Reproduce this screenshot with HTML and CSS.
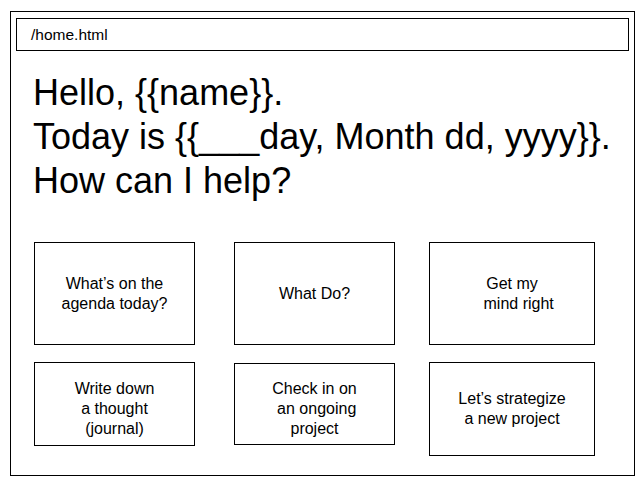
FILE: index.html
```html
<!DOCTYPE html>
<html>
<head>
<meta charset="utf-8">
<link rel="stylesheet" href="styles.css">
</head>
<body>
<div class="frame">
  <div class="address">/home.html</div>
  <h1 class="greeting">Hello, {{name}}.<br>Today is {{___day, Month dd, yyyy}}.<br>How can I help?</h1>
  <div class="grid">
    <div class="card card-tall">What’s on the<br>agenda today?</div>
    <div class="card card-tall">What Do?</div>
    <div class="card card-tall card-wide">Get my<br>&nbsp;&nbsp;&nbsp;mind right</div>
    <div class="card card-short card-low">Write down<br>a thought<br>(journal)</div>
    <div class="card card-shorter card-low2">Check in on<br>&nbsp;an ongoing<br>project</div>
    <div class="card card-mid card-wide">Let’s strategize<br>a new project</div>
  </div>
</div>
</body>
</html>
```

FILE: styles.css
```css
html, body {
  margin: 0;
  padding: 0;
  background: #fff;
}

body {
  font-family: "Liberation Sans", Arial, sans-serif;
  color: #000;
}

.frame {
  box-sizing: border-box;
  margin: 11px 0 0 10px;
  width: 625px;
  height: 465px;
  border: 1px solid #000;
  padding: 6px 5px 0 5px;
}

.address {
  box-sizing: border-box;
  width: 613px;
  height: 33px;
  border: 1px solid #000;
  padding-left: 14px;
  font-size: 15.5px;
  line-height: 31px;
}

.greeting {
  margin: 20px 0 0 17px;
  font-size: 36px;
  font-weight: normal;
  line-height: 44px;
}

.grid {
  display: grid;
  grid-template-columns: 200px 195px 166px;
  row-gap: 17px;
  align-items: start;
  justify-items: start;
  margin: 39px 0 0 18px;
}

.card {
  box-sizing: border-box;
  width: 161px;
  border: 1px solid #000;
  display: flex;
  align-items: center;
  justify-content: center;
  text-align: center;
  font-size: 16px;
  line-height: 20px;
}

.card-wide { width: 166px; }
.card-tall { height: 103px; }
.card-short { height: 84px; }
.card-shorter { height: 82px; margin-top: 1px; }
.card-mid { height: 94px; }
.card-low { padding-top: 10px; }
.card-low2 { padding-top: 10px; }
```
